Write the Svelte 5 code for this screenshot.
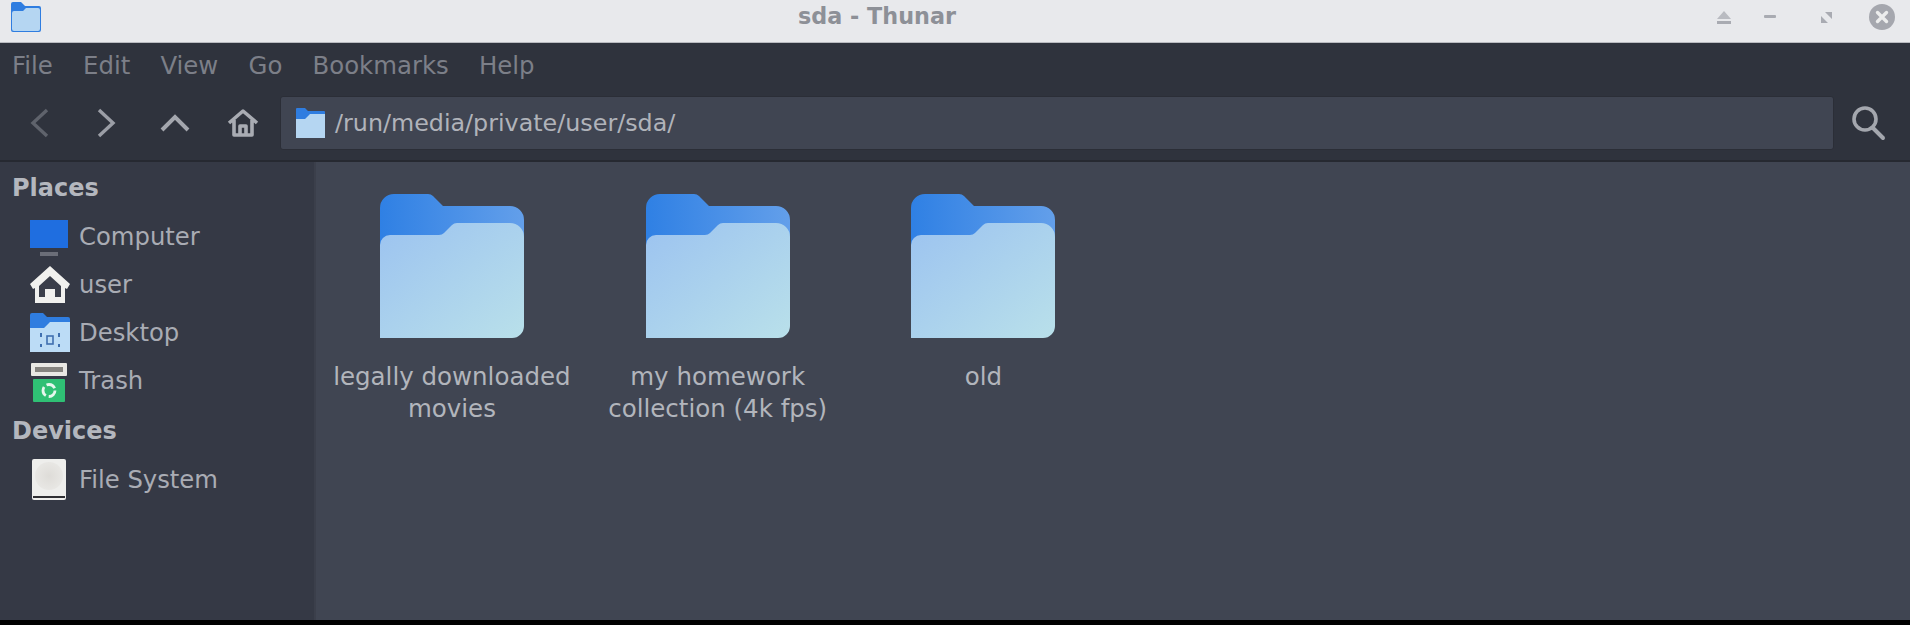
<script>
	const menus = ['File', 'Edit', 'View', 'Go', 'Bookmarks', 'Help'];
	const folders = [
		{ id: 'a', name: 'legally downloaded movies' },
		{ id: 'b', name: 'my homework collection (4k fps)' },
		{ id: 'c', name: 'old' }
	];
</script>

<div class="window">
	<header class="titlebar">
		<svg class="app-icon" width="30" height="30" viewBox="0 0 30 30">
			<path d="M2 0h8l4 4h14a2 2 0 0 1 2 2v22a2 2 0 0 1-2 2H2a2 2 0 0 1-2-2V2a2 2 0 0 1 2-2z" fill="#2f7de0" />
			<path d="M1 11a2 2 0 0 1 2-2h9l3-3h12a2 2 0 0 1 2 2v19a2 2 0 0 1-2 2H3a2 2 0 0 1-2-2z" fill="#b5d6f2" />
		</svg>
		<span class="title">sda - Thunar</span>
		<div class="controls">
			<svg class="eject" width="16" height="14" viewBox="0 0 16 14"><path d="M8 0l7 8H1z" fill="#b9bbc1" /><rect x="1" y="10" width="14" height="3" fill="#a9abb2" /></svg>
			<svg class="min" width="13" height="4" viewBox="0 0 13 4"><rect width="12" height="3" rx="1" fill="#a9abb2" /></svg>
			<svg class="max" width="13" height="13" viewBox="0 0 13 13"><path d="M5 1h7v7zM1 5l7 7H1z" fill="#a9abb2" /></svg>
			<svg class="close" width="26" height="26" viewBox="0 0 26 26"><circle cx="13" cy="13" r="13" fill="#a5a7ae" /><path d="M8.5 8.5l9 9m0-9l-9 9" stroke="#eceded" stroke-width="3.4" stroke-linecap="round" /></svg>
		</div>
	</header>

	<nav class="menubar">
		{#each menus as m}
			<span>{m}</span>
		{/each}
	</nav>

	<div class="toolbar">
		<div class="nav-icons">
			<svg width="24" height="32" viewBox="0 0 24 32"><path d="M20 3L6 16l14 13" fill="none" stroke="#5f636c" stroke-width="3.4" /></svg>
			<svg width="24" height="32" viewBox="0 0 24 32"><path d="M4 3l14 13L4 29" fill="none" stroke="#9b9ea6" stroke-width="3.4" /></svg>
			<svg width="32" height="22" viewBox="0 0 32 22"><path d="M3 18L16 5l13 13" fill="none" stroke="#a4a7ae" stroke-width="4" /></svg>
			<svg width="34" height="30" viewBox="0 0 34 30"><path d="M3 15L17 3l14 12M8 12v15h18V12M14 27v-9h6v9" fill="none" stroke="#a9acb3" stroke-width="3.6" stroke-linejoin="round" /></svg>
		</div>
		<div class="location">
			<svg width="29" height="30" viewBox="0 0 29 30">
				<path d="M0 1a1 1 0 0 1 1-1h8l3 3h16a1 1 0 0 1 1 1v8H0z" fill="#2f7de0" />
				<path d="M0 11h9l5-5h15v24H0z" fill="#b5d6f2" />
			</svg>
			<span>/run/media/private/user/sda/</span>
		</div>
		<svg class="search" width="35" height="36" viewBox="0 0 35 36"><circle cx="14" cy="14" r="11" fill="none" stroke="#a4a7ae" stroke-width="3.6" /><path d="M22 23l10 10" stroke="#a4a7ae" stroke-width="4" stroke-linecap="round" /></svg>
	</div>

	<div class="body">
		<aside class="sidebar">
			<h3>Places</h3>
			<div class="place">
				<svg width="40" height="40" viewBox="0 0 40 40"><rect x="0" y="4" width="38" height="28" fill="#1f6ee0" /><rect x="10" y="36" width="18" height="4" fill="#6b6e78" /></svg>
				<span>Computer</span>
			</div>
			<div class="place">
				<svg width="40" height="42" viewBox="0 0 40 42">
					<path d="M20 3L40 21l-3 5-2-1v15H5V25l-2 1-3-5z" fill="#f1f1ee" />
					<path d="M20 13l11 10v11h-6V26H15v8H9V23z" fill="#3b3f4a" />
				</svg>
				<span>user</span>
			</div>
			<div class="place">
				<svg class="wide" width="42" height="42" viewBox="0 -2 42 42">
					<path d="M1 2a2 2 0 0 1 2-2h11l4 4h21a2 2 0 0 1 2 2v10H1z" fill="#2f7de0" />
					<path d="M1 15h14l6-6h20v30H1z" fill="#bcdcf6" />
					<path d="M13 21h-1v3M29 21h1v3M12 31v2h1M30 31v2h-1" fill="none" stroke="#3f6fb0" stroke-width="2" />
					<rect x="18" y="23" width="6" height="8" fill="none" stroke="#3f6fb0" stroke-width="1.6" />
				</svg>
				<span>Desktop</span>
			</div>
			<div class="place">
				<svg width="40" height="46" viewBox="0 0 40 46">
					<rect x="1" y="6" width="36" height="13" rx="1" fill="#e9e8e4" />
					<rect x="5" y="10" width="28" height="5" fill="#85837f" />
					<rect x="3" y="22" width="32" height="23" rx="1" fill="#2fc074" />
					<circle cx="19" cy="33.5" r="6" fill="none" stroke="#e6f7ee" stroke-width="2.8" stroke-dasharray="9.5 3" />
				</svg>
				<span>Trash</span>
			</div>
			<h3 class="devices">Devices</h3>
			<div class="place">
				<svg width="40" height="46" viewBox="0 0 40 46">
					<defs><radialGradient id="disk"><stop offset="0" stop-color="#dedcd8" /><stop offset="1" stop-color="#e8e7e4" /></radialGradient></defs>
					<rect x="2" y="3" width="34" height="41" rx="2" fill="#eeeeec" />
					<circle cx="19" cy="20" r="14" fill="url(#disk)" />
					<rect x="3" y="40" width="32" height="2" fill="#2f2f33" />
				</svg>
				<span>File System</span>
			</div>
		</aside>

		<main class="files">
			{#each folders as f}
				<div class="folder">
					<svg width="144" height="145" viewBox="0 0 144 145">
						<defs>
							<linearGradient id="back-{f.id}" x1="0" y1="0" x2="1" y2="0"><stop offset="0" stop-color="#2f80e4" /><stop offset="1" stop-color="#639fea" /></linearGradient>
							<linearGradient id="front-{f.id}" x1="0" y1="0" x2="1" y2="1"><stop offset="0" stop-color="#9cc3f0" /><stop offset="1" stop-color="#b9e0ea" /></linearGradient>
						</defs>
						<path d="M0 14A14 14 0 0 1 14 0h34q3 0 5 2l10 10h67a14 14 0 0 1 14 14v50H0z" fill="url(#back-{f.id})" />
						<path d="M0 51a10 10 0 0 1 10-10h49q3 0 5-2l8-8q2-2 5-2h53a14 14 0 0 1 14 14v89a12 12 0 0 1-12 12H0z" fill="url(#front-{f.id})" />
					</svg>
					<span>{f.name}</span>
				</div>
			{/each}
		</main>
	</div>
	<div class="bottom"></div>
</div>

<style>
	:global(body) {
		background: #000;
	}

	.window {
		width: 1910px;
		height: 625px;
		display: flex;
		flex-direction: column;
		font-family: 'DejaVu Sans', sans-serif;
		font-size: 24px;
		overflow: hidden;
	}

	.titlebar {
		height: 42px;
		flex: none;
		background: #e8e9ec;
		border-bottom: 1px solid #b9bbc0;
		display: flex;
		align-items: center;
		position: relative;
		padding: 0 11px;
	}

	.app-icon {
		margin-top: -8px;
	}

	.title {
		position: absolute;
		left: 798px;
		top: 3px;
		color: #8d9097;
		font-size: 22.3px;
		font-weight: bold;
	}

	.controls {
		position: absolute;
		top: 0;
		left: 0;
		right: 0;
		bottom: 0;
	}

	.controls svg {
		position: absolute;
	}

	.eject {
		left: 1716px;
		top: 11px;
	}

	.min {
		left: 1764px;
		top: 15px;
	}

	.max {
		left: 1820px;
		top: 11px;
	}

	.close {
		left: 1869px;
		top: 4px;
	}

	.menubar {
		height: 43px;
		flex: none;
		box-sizing: border-box;
		padding: 2px 0 0 12px;
		background: #2f333d;
		display: flex;
		align-items: center;
		gap: 30.2px;
		color: #7c7f88;
		font-size: 24.4px;
	}

	.toolbar {
		height: 76px;
		flex: none;
		box-sizing: border-box;
		background: #2f333d;
		border-bottom: 2px solid #262931;
		display: flex;
		align-items: center;
	}

	.nav-icons {
		display: grid;
		grid-template-columns: repeat(4, 68px);
		justify-items: center;
		align-items: center;
		padding-left: 5px;
		width: 280px;
		box-sizing: border-box;
	}

	.location {
		width: 1554px;
		height: 54px;
		box-sizing: border-box;
		background: #404552;
		border-radius: 3px;
		border: 1px solid #2b2e37;
		display: flex;
		align-items: center;
		gap: 10px;
		padding-left: 15px;
		color: #b0b3ba;
		font-size: 23.8px;
	}

	.search {
		margin-left: 17px;
	}

	.body {
		flex: 1;
		display: flex;
		min-height: 0;
	}

	.sidebar {
		width: 316px;
		box-sizing: border-box;
		background: #353945;
		border-right: 2px solid #3b3f4b;
		padding-top: 9px;
		color: #a9acb4;
	}

	h3 {
		margin: 0 0 7px 12px;
		font-size: 24px;
		line-height: 34px;
		color: #b4b7be;
	}

	.devices {
		margin-top: 10px;
	}

	.place {
		height: 48px;
		display: flex;
		align-items: center;
		gap: 9px;
		padding-left: 30px;
		font-size: 24.3px;
	}

	.wide {
		margin: 0 -1px;
	}

	.files {
		flex: 1;
		background: #404552;
		display: flex;
		align-items: flex-start;
		padding-top: 32px;
		padding-left: 3px;
	}

	.folder {
		width: 265.8px;
		display: flex;
		flex-direction: column;
		align-items: center;
		text-align: center;
		color: #b2b5bc;
		font-size: 24.5px;
		line-height: 32px;
		gap: 22px;
	}

	.folder span {
		width: 250px;
	}

	.bottom {
		height: 5px;
		flex: none;
		background: #000;
	}
</style>
